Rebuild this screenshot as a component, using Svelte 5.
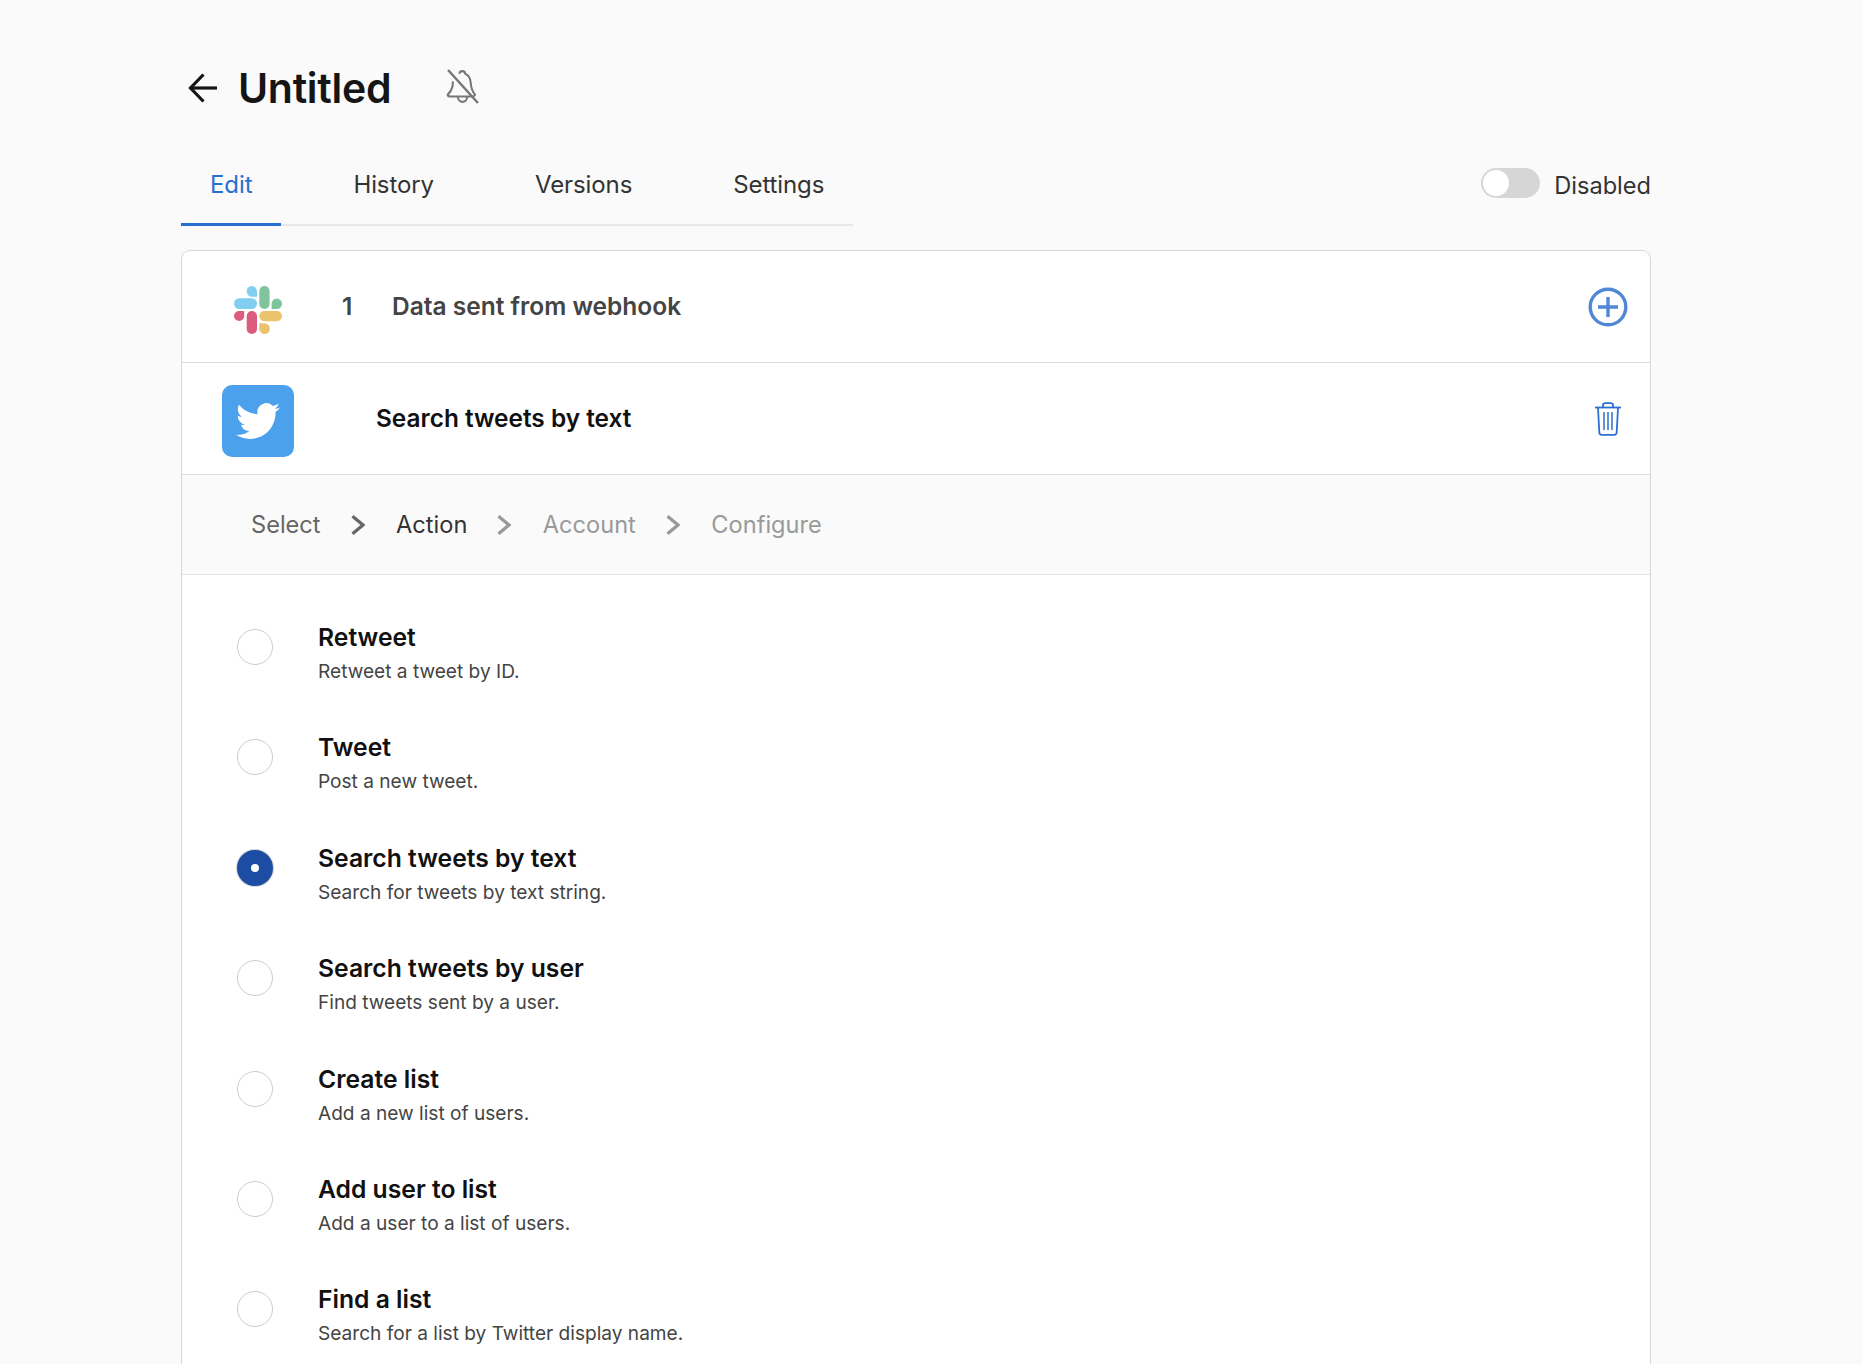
<script lang="ts">
	const tabs = ['Edit', 'History', 'Versions', 'Settings'];
	const steps = [
		{ label: 'Select', state: 'done' },
		{ label: 'Action', state: 'current' },
		{ label: 'Account', state: 'todo' },
		{ label: 'Configure', state: 'todo' }
	];
	const actions = [
		{ id: 'retweet', title: 'Retweet', desc: 'Retweet a tweet by ID.' },
		{ id: 'tweet', title: 'Tweet', desc: 'Post a new tweet.' },
		{ id: 'search-text', title: 'Search tweets by text', desc: 'Search for tweets by text string.' },
		{ id: 'search-user', title: 'Search tweets by user', desc: 'Find tweets sent by a user.' },
		{ id: 'create-list', title: 'Create list', desc: 'Add a new list of users.' },
		{ id: 'add-user', title: 'Add user to list', desc: 'Add a user to a list of users.' },
		{ id: 'find-list', title: 'Find a list', desc: 'Search for a list by Twitter display name.' }
	];

	let activeTab = $state('Edit');
	let selected = $state('search-text');
	let enabled = $state(false);
</script>

<div class="page">
	<header class="title-row">
		<button class="icon-btn back" aria-label="Back">
			<svg viewBox="0 0 30 30" width="30" height="30" fill="none" stroke="currentColor" stroke-width="3.2">
				<path d="M29 15H2.5" />
				<path d="M15.5 1.5 2.5 15l13 13.5" />
			</svg>
		</button>
		<h1>Untitled</h1>
		<button class="icon-btn bell" aria-label="Notifications off">
			<svg viewBox="0 0 32 34" width="33" height="35" fill="none" stroke="currentColor" stroke-width="2" stroke-linejoin="round">
				<path d="M13 4.600c0-3.400 5.600-3.400 5.600 0 4.200 1.500 5.200 5.200 5.400 9 .2 4.200 1 7.300 4.200 11.400-.4 1.300-1.500 1.700-3 1.700H5c-2 0-3.400-.6-3.400-1.800 2.800-2.500 4-5 4.600-7.700.4-1.800.3-3.600.5-5.200" />
				<path d="M11.500 27c0 6.600 9 6.600 9 0" />
				<path d="M2 1l29 32" stroke-width="2.400" />
			</svg>
		</button>
	</header>

	<div class="nav-row">
		<nav class="tabs">
			{#each tabs as tab}
				<button class="tab" class:active={activeTab === tab} onclick={() => (activeTab = tab)}>{tab}</button>
			{/each}
		</nav>
		<div class="switch-wrap">
			<button class="switch" class:on={enabled} aria-label="Toggle" onclick={() => (enabled = !enabled)}>
				<span class="knob"></span>
			</button>
			<span class="switch-label">{enabled ? 'Enabled' : 'Disabled'}</span>
		</div>
	</div>

	<section class="card">
		<div class="row trigger">
			<div class="logo-slot">
				<svg viewBox="0 0 48 48" width="48" height="48">
					<path fill="#81cef1" d="M18 0a5.300 5.300 0 0 0 0 10.700h5V5.300A5.300 5.300 0 0 0 18 0z" />
					<rect fill="#81cef1" x="0" y="12.300" width="23" height="10.700" rx="5.300" />
					<rect fill="#7fc49d" x="25.300" y="0" width="10.300" height="23" rx="5.100" />
					<path fill="#7fc49d" d="M48 17.600a5.200 5.200 0 0 0-10.400 0V23h5.200a5.200 5.200 0 0 0 5.200-5.400z" />
					<path fill="#dc5c7d" d="M0 30a5.100 5.100 0 0 0 10.200 0v-5H5.100A5.100 5.100 0 0 0 0 30z" />
					<rect fill="#dc5c7d" x="12.700" y="25" width="10.300" height="23" rx="5.100" />
					<rect fill="#ebc36d" x="25.300" y="25" width="22.700" height="10.200" rx="5.100" />
					<path fill="#ebc36d" d="M30.500 48a5.200 5.200 0 0 0 0-10.700h-5.200v5.500a5.200 5.200 0 0 0 5.200 5.200z" />
				</svg>
			</div>
			<span class="step-no">1</span>
			<span class="trigger-name">Data sent from webhook</span>
			<button class="icon-btn plus" aria-label="Add step">
				<svg viewBox="0 0 40 40" width="40" height="40" fill="none" stroke="#5088d6" stroke-width="3.400">
					<circle cx="20" cy="20" r="17.800" />
					<path d="M20 10v20M10 20h20" />
				</svg>
			</button>
		</div>

		<div class="row step">
			<div class="logo-slot">
				<div class="twitter">
					<svg viewBox="0 0 24 24" width="44" height="44" fill="#fff">
						<path d="M23.953 4.570a10 10 0 0 1-2.825.775 4.958 4.958 0 0 0 2.163-2.723c-.951.555-2.005.959-3.127 1.184a4.920 4.920 0 0 0-8.384 4.482C7.690 8.095 4.067 6.130 1.640 3.162a4.822 4.822 0 0 0-.666 2.475c0 1.710.870 3.213 2.188 4.096a4.904 4.904 0 0 1-2.228-.616v.060a4.923 4.923 0 0 0 3.946 4.827 4.996 4.996 0 0 1-2.212.085 4.936 4.936 0 0 0 4.604 3.417 9.867 9.867 0 0 1-6.102 2.105c-.390 0-.779-.023-1.170-.067a13.995 13.995 0 0 0 7.557 2.209c9.053 0 13.998-7.496 13.998-13.985 0-.210 0-.420-.015-.630A9.935 9.935 0 0 0 24 4.590z" />
					</svg>
				</div>
			</div>
			<span class="step-name">Search tweets by text</span>
			<button class="icon-btn trash" aria-label="Delete step">
				<svg viewBox="0 0 28 34" width="28" height="34" fill="none" stroke="#2b6fd0" stroke-width="1.800">
					<path d="M1 5.500h26" />
					<path d="M9 5V3.500C9 2 10 1.200 11.500 1.200h5C18 1.200 19 2 19 3.500V5" />
					<path d="M4 6l1.300 24.500c.1 1.500 1 2.300 2.500 2.300h12.400c1.500 0 2.400-.8 2.500-2.300L24 6" />
					<path d="M10 10v18M14 10v18M18 10v18" stroke-width="1.500" />
				</svg>
			</button>
		</div>

		<div class="crumbs">
			{#each steps as s, i}
				<span class={'crumb ' + s.state}>{s.label}</span>
				{#if i < steps.length - 1}
					<svg class={'chev ' + steps[i + 1].state} viewBox="0 0 14 20" width="14" height="20" fill="none" stroke="currentColor" stroke-width="3.200">
						<path d="M1.500 1.200 12 10 1.500 18.800" />
					</svg>
				{/if}
			{/each}
		</div>

		<div class="action-list">
			{#each actions as a}
				<label class="action">
					<input type="radio" name="action" value={a.id} bind:group={selected} />
					<span class="action-text">
						<span class="action-title">{a.title}</span>
						<span class="action-desc">{a.desc}</span>
					</span>
				</label>
			{/each}
		</div>
	</section>
</div>

<style>
	:global(body) {
		margin: 0;
		background: #fafafa;
		height: 100vh;
		overflow: hidden;
	}

	.page {
		box-sizing: border-box;
		width: 1862px;
		padding: 0 211px 0 181px;
		font-family: Inter, 'Liberation Sans', sans-serif;
		color: #111;
	}

	button {
		font: inherit;
		background: none;
		border: none;
		padding: 0;
		cursor: pointer;
	}

	.icon-btn {
		display: flex;
		align-items: center;
		justify-content: center;
	}

	.title-row {
		display: flex;
		align-items: center;
		height: 176px;
	}

	.back {
		color: #151515;
		margin-left: 7px;
	}

	h1 {
		margin: 0 0 0 20px;
		font-size: 41px;
		font-weight: 600;
		letter-spacing: -0.3px;
		color: #151515;
	}

	.bell {
		color: #777;
		margin: -3px 0 0 55px;
	}

	.nav-row {
		display: flex;
		justify-content: space-between;
		align-items: flex-start;
		height: 74px;
	}

	.tabs {
		display: flex;
		gap: 43px;
		height: 48px;
		border-bottom: 2px solid #e8e8e8;
	}

	.tab {
		height: 50px;
		padding: 0 29px 29px;
		font-size: 24px;
		line-height: 18px;
		letter-spacing: -0.1px;
		color: #333;
		border-bottom: 3px solid transparent;
		box-sizing: border-box;
	}

	.tab.active {
		color: #2a6fd0;
		border-bottom-color: #2a6fd0;
	}

	.switch-wrap {
		display: flex;
		align-items: center;
		gap: 14px;
		height: 18px;
	}

	.switch {
		position: relative;
		width: 59px;
		height: 30px;
		margin-bottom: 4px;
		border-radius: 15px;
		background: #d6d6d6;
	}

	.knob {
		position: absolute;
		left: 2px;
		top: 2px;
		width: 26px;
		height: 26px;
		border-radius: 50%;
		background: #fff;
	}

	.switch.on {
		background: #2a6fd0;
	}

	.switch.on .knob {
		left: 31px;
	}

	.switch-label {
		font-size: 23.600px;
		color: #333;
	}

	.card {
		background: #fff;
		border: 1px solid #d8d8d8;
		border-bottom: none;
		border-radius: 9px 9px 0 0;
		margin-bottom: 200px;
	}

	.row {
		display: flex;
		align-items: center;
		height: 111px;
		border-bottom: 1px solid #dcdcdc;
	}

	.logo-slot {
		width: 152px;
		padding: 5px 40px 0;
		box-sizing: border-box;
		display: flex;
		align-items: center;
		justify-content: center;
		flex-shrink: 0;
	}

	.trigger .logo-slot {
		padding-top: 7px;
	}

	.twitter {
		width: 72px;
		height: 72px;
		flex-shrink: 0;
		border-radius: 10px;
		background: #4ba1ec;
		display: flex;
		align-items: center;
		justify-content: center;
	}

	.step-no {
		width: 50px;
		margin: 0 0 2px 8px;
		font-size: 24.500px;
		font-weight: 600;
		color: #444;
	}

	.trigger-name {
		margin-bottom: 2px;
		font-size: 24.500px;
		font-weight: 600;
		color: #444;
	}

	.step-name {
		margin: 0 0 2px 42px;
		font-size: 24.400px;
		font-weight: 600;
		color: #111;
	}

	.plus,
	.trash {
		margin-left: auto;
		margin-right: 22px;
	}

	.trash {
		margin-right: 28px;
	}

	.crumbs {
		display: flex;
		align-items: center;
		height: 99px;
		padding-left: 69px;
		background: #fafafa;
		border-bottom: 1px solid #e2e2e6;
		font-size: 23.600px;
	}

	.crumb.done {
		color: #666;
	}

	.crumb.current {
		color: #333;
	}

	.crumb.todo {
		color: #999;
	}

	.chev {
		margin: 0 31.500px 0 30px;
		color: #666;
	}

	.chev.todo {
		color: #999;
	}

	.chev.current {
		color: #666;
	}

	.action-list {
		display: flex;
		flex-direction: column;
		padding: 47px 0 100px 55px;
	}

	.action {
		display: flex;
		align-items: flex-start;
		gap: 45px;
		height: 110.400px;
		cursor: pointer;
	}

	input[type='radio'] {
		appearance: none;
		flex-shrink: 0;
		width: 36px;
		height: 36px;
		margin: 7px 0 0;
		border-radius: 50%;
		border: 1px solid #ccc;
		background: #fff;
		box-sizing: border-box;
		cursor: pointer;
	}

	input[type='radio']:checked {
		border: 14.500px solid #1c4da3;
		box-shadow: 0 0 0 1px #d0d0d8;
	}

	.action-text {
		display: flex;
		flex-direction: column;
		gap: 4px;
		margin-top: -1px;
	}

	.action-title {
		font-size: 24.700px;
		font-weight: 600;
		line-height: 32px;
		color: #111;
	}

	.action-desc {
		font-size: 19.100px;
		line-height: 28px;
		color: #444;
	}
</style>
